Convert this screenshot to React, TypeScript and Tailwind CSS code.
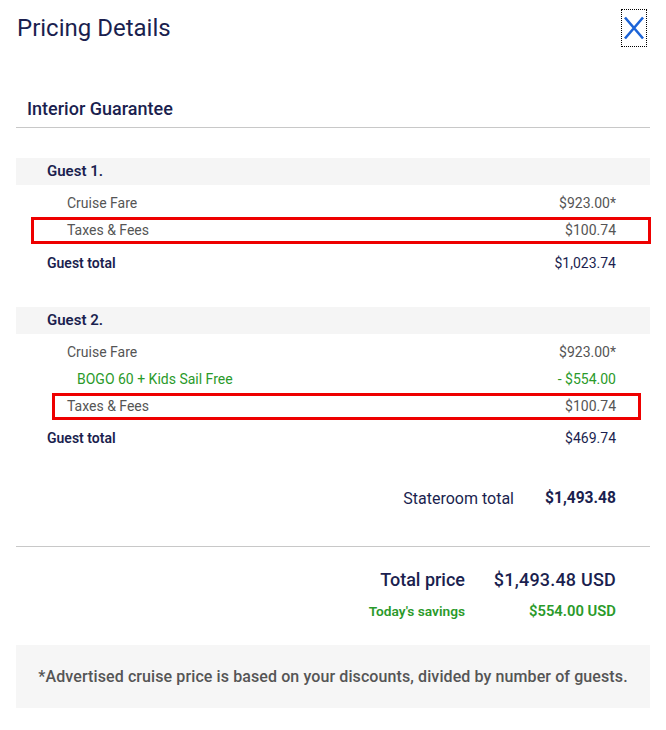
import React from "react";

const navy = "text-[#1b1f4f]";

function Row({
  label,
  value,
  labelClass,
  valueClass,
  boxClass,
}: {
  label: string;
  value: string;
  labelClass: string;
  valueClass: string;
  boxClass: string;
}) {
  return (
    <div className={`flex h-[27px] items-center justify-between ${boxClass}`}>
      <span className={labelClass}>{label}</span>
      <span className={valueClass}>{value}</span>
    </div>
  );
}

function Band({ text }: { text: string }) {
  return (
    <div className="flex h-[27px] items-center bg-[#f5f5f5] pl-[31px]">
      <span className={`text-[15px] font-semibold ${navy}`}>{text}</span>
    </div>
  );
}

export default function App() {
  const gray = "text-[14px] text-[#555555]";
  return (
    <div
      className="min-h-[730px] w-[666px] bg-white px-4"
      style={{ fontFamily: "Roboto, 'Open Sans', sans-serif" }}
    >
      <div className="flex h-[56px] items-center justify-between">
        <h1 className={`pl-[1px] text-[24px] ${navy}`}>Pricing Details</h1>
        <button className="mr-[3px] flex h-[38px] w-[26px] items-center justify-center border border-dotted border-black">
          <svg width="22" height="24" viewBox="0 0 22 24">
            <path d="M2 1.5 L20 22.5 M20 1.5 L2 22.5" stroke="#1c64d8" strokeWidth="2.6" fill="none" />
          </svg>
        </button>
      </div>

      <div className="mt-[40px] flex h-[32px] items-start border-b border-[#c8c8c8] pl-[11px]">
        <span className={`flex h-[24px] items-center text-[18px] font-medium ${navy}`}>Interior Guarantee</span>
      </div>

      <div className="mt-[30px]">
        <Band text="Guest 1." />
        <div className="mt-[5px]">
          <Row label="Cruise Fare" value="$923.00*" labelClass={gray} valueClass={gray} boxClass="pl-[51px] pr-[34px]" />
          <Row
            label="Taxes & Fees"
            value="$100.74"
            labelClass={gray}
            valueClass={gray}
            boxClass="ml-[15px] mr-[-1px] h-[24px] border-[3px] border-[#ee0000] pl-[33px] pr-[32px]"
          />
          <div className="mt-[6px]">
            <Row
              label="Guest total"
              value="$1,023.74"
              labelClass={`text-[14px] font-semibold ${navy}`}
              valueClass={`text-[14px] ${navy}`}
              boxClass="pl-[31px] pr-[34px]"
            />
          </div>
        </div>
      </div>

      <div className="mt-[30px]">
        <Band text="Guest 2." />
        <div className="mt-[5px]">
          <Row label="Cruise Fare" value="$923.00*" labelClass={gray} valueClass={gray} boxClass="pl-[51px] pr-[34px]" />
          <Row
            label="BOGO 60 + Kids Sail Free"
            value="- $554.00"
            labelClass="text-[14px] text-[#2a9a2a]"
            valueClass="text-[14px] text-[#2a9a2a]"
            boxClass="pl-[61px] pr-[34px]"
          />
          <Row
            label="Taxes & Fees"
            value="$100.74"
            labelClass={gray}
            valueClass={gray}
            boxClass="ml-[36px] mr-[9px] h-[26px] border-[3px] border-[#ee0000] pl-[12px] pr-[22px]"
          />
          <div className="mt-[5px]">
            <Row
              label="Guest total"
              value="$469.74"
              labelClass={`text-[14px] font-semibold ${navy}`}
              valueClass={`text-[14px] ${navy}`}
              boxClass="pl-[31px] pr-[34px]"
            />
          </div>
        </div>
      </div>

      <div className={`mt-[33px] flex h-[27px] items-center justify-end gap-[31px] pr-[34px] ${navy}`}>
        <span className="text-[16px]">Stateroom total</span>
        <span className="text-[15.6px] font-bold">$1,493.48</span>
      </div>

      <div className="mt-[34px] border-t border-[#c8c8c8]" />

      <div className="mt-[19px] grid grid-cols-[1fr_151px] pr-[34px]">
        <div className={`flex h-[27px] items-center justify-end text-[18px] font-medium ${navy}`}>Total price</div>
        <div className={`flex h-[27px] items-center justify-end text-[18px] font-medium tracking-[0.2px] ${navy}`}>$1,493.48 USD</div>
        <div className="mt-[5px] flex h-[26px] items-center justify-end text-[13.7px] font-semibold text-[#2a9a2a]">Today's savings</div>
        <div className="mt-[5px] flex h-[26px] items-center justify-end text-[14.8px] font-semibold text-[#2a9a2a]">$554.00 USD</div>
      </div>

      <div className="mt-[21px] flex h-[63px] items-center justify-center bg-[#f6f6f6]">
        <p className="text-[16px] font-medium tracking-[0.1px] text-[#555555]">
          *Advertised cruise price is based on your discounts, divided by number of guests.
        </p>
      </div>
    </div>
  );
}
